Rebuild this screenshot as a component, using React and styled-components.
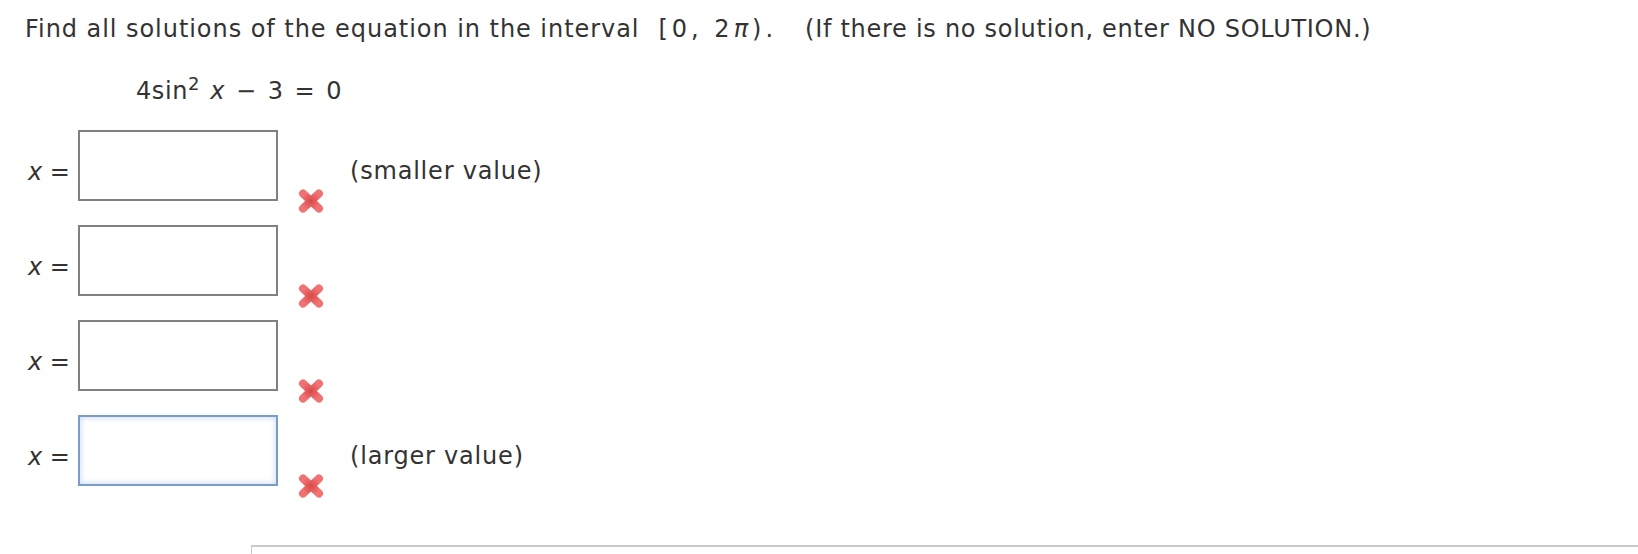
import React from "react";
import styled, { createGlobalStyle } from "styled-components";

const Global = createGlobalStyle`
  html, body { margin: 0; padding: 0; background: #fff; overflow: hidden; }
  body { font-family: "DejaVu Sans", Verdana, sans-serif; color: #333; }
`;

const Page = styled.div`
  padding: 15px 0 0 25px;
  display: flex;
  flex-direction: column;
`;

const Question = styled.div`
  font-size: 24px;
  line-height: 28px;
  letter-spacing: 0.95px;
  white-space: nowrap;
`;

const Interval = styled.span`
  letter-spacing: 4px;
  margin: 0 28px 0 19px;
`;

const Note = styled.span`
  letter-spacing: 0.72px;
`;

const Pi = styled.i`
  font-style: italic;
`;

const Equation = styled.div`
  font-size: 24px;
  line-height: 28px;
  letter-spacing: 0.6px;
  margin: 34px 0 0 111px;
  white-space: nowrap;
`;

const Var = styled.i`
  font-style: italic;
`;

const Sup = styled.sup`
  font-size: 18px;
  vertical-align: 9px;
  line-height: 0;
  margin-right: 10px;
`;

const Op = styled.span`
  margin: 0 ${(p) => p.$gap || 12}px;
`;

const Rows = styled.div`
  display: flex;
  flex-direction: column;
  gap: 24px;
  margin-top: 25px;
`;

const Row = styled.div`
  display: grid;
  grid-template-columns: 50px 200px 28px auto;
  height: 71px;
  margin-left: 3px;
`;

const Label = styled.div`
  font-size: 24px;
  align-self: center;
  white-space: nowrap;
  padding-top: 12px;
`;

const Input = styled.div`
  box-sizing: border-box;
  width: 200px;
  height: 71px;
  border: 2px solid ${(p) => (p.$focused ? "#7b9bc8" : "#808080")};
  box-shadow: ${(p) => (p.$focused ? "inset 0 0 6px rgba(120,160,220,0.45)" : "none")};
  background: #fff;
`;

const Mark = styled.div`
  align-self: end;
  margin: 0 0 -13px 19px;
  width: 28px;
  height: 26px;
`;

const Hint = styled.div`
  font-size: 24px;
  letter-spacing: 0.8px;
  align-self: center;
  margin-left: 44px;
  padding-top: 10px;
  white-space: nowrap;
`;

const Footer = styled.div`
  margin: 59px 0 0 226px;
  height: 8px;
  border-top: 2px solid #c8c8c8;
  border-left: 1px solid #c8c8c8;
`;

const Cross = () => (
  <svg width="28" height="26" viewBox="0 0 28 26">
    <defs>
      <radialGradient id="cg" cx="50%" cy="50%" r="60%">
        <stop offset="0%" stopColor="#d94848" />
        <stop offset="100%" stopColor="#f07272" />
      </radialGradient>
    </defs>
    <g stroke="url(#cg)" strokeWidth="8" strokeLinecap="round">
      <line x1="6" y1="5.5" x2="22" y2="20.5" />
      <line x1="22" y1="5.5" x2="6" y2="20.5" />
    </g>
  </svg>
);

const rows = [
  { hint: "(smaller value)" },
  { hint: "" },
  { hint: "" },
  { hint: "(larger value)", focused: true },
];

export default function App() {
  return (
    <>
      <Global />
      <Page>
        <Question>
          Find all solutions of the equation in the interval
          <Interval>
            [0, 2<Pi>π</Pi>).
          </Interval>
          <Note>(If there is no solution, enter NO SOLUTION.)</Note>
        </Question>
        <Equation>
          4sin<Sup>2</Sup>
          <Var>x</Var>
          <Op $gap={11}>−</Op>3<Op $gap={11}>=</Op>0
        </Equation>
        <Rows>
          {rows.map((r, i) => (
            <Row key={i}>
              <Label>
                <Var>x</Var> =
              </Label>
              <Input $focused={r.focused} />
              <Mark>
                <Cross />
              </Mark>
              <Hint>{r.hint}</Hint>
            </Row>
          ))}
        </Rows>
        <Footer />
      </Page>
    </>
  );
}
